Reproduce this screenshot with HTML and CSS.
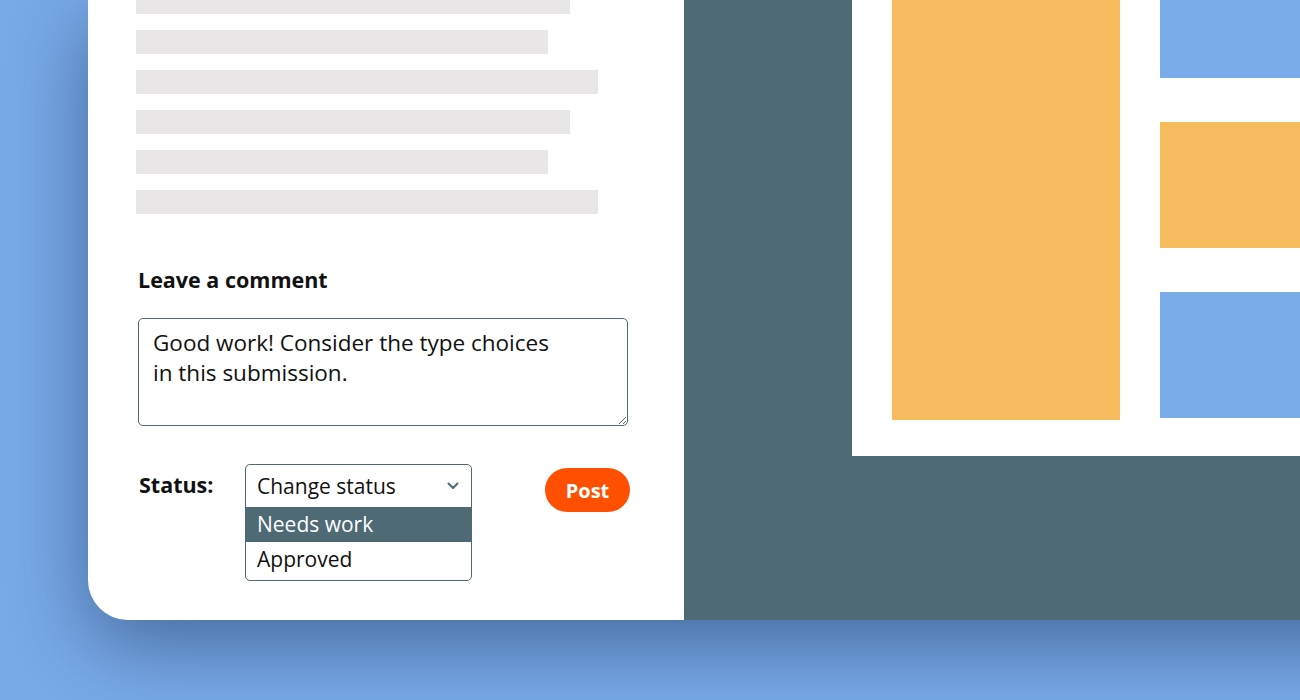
FILE: index.html
```html
<!DOCTYPE html>
<html lang="en">
<head>
    <meta charset="UTF-8">
    <meta name="viewport" content="width=device-width, initial-scale=1.0">
    <title>Review submission</title>
    <link rel="stylesheet" href="styles.css">
</head>
<body>

<div class="frame">

    <!-- 왼쪽: 글 본문 + 코멘트 -->
    <div class="review">
        <div class="lines">
            <div class="line w1"></div>
            <div class="line w2"></div>
            <div class="line w3"></div>
            <div class="line w1"></div>
            <div class="line w2"></div>
            <div class="line w3"></div>
        </div>

        <div class="comment">
            <h2 class="comment-title">Leave a comment</h2>
            <textarea class="comment-box">Good work! Consider the type choices
in this submission.</textarea>

            <div class="status-row">
                <span class="status-label">Status:</span>
                <div class="select">
                    <div class="select-head">
                        <span>Change status</span>
                        <svg class="chevron" width="12" height="8" viewBox="0 0 12 8">
                            <path d="M1.5 1.5 L6 6 L10.5 1.5" fill="none" stroke="#4d6a75" stroke-width="2" stroke-linecap="round" stroke-linejoin="round"/>
                        </svg>
                    </div>
                    <div class="option active">Needs work</div>
                    <div class="option">Approved</div>
                </div>
                <button class="post-btn">Post</button>
            </div>
        </div>
    </div>

    <!-- 오른쪽: 제출물 미리보기 -->
    <div class="preview">
        <div class="canvas">
            <div class="block big"></div>
            <div class="side">
                <div class="block blue"></div>
                <div class="block orange"></div>
                <div class="block blue"></div>
            </div>
        </div>
    </div>

</div>

</body>
</html>
```

FILE: styles.css
```css
html, body {
    margin: 0;
    height: 100%;
}
body {
    background-color: #78abe8;
    font-family: "Open Sans", Lato, sans-serif;
    overflow: hidden;
}
.frame {
    display: flex;
    margin-left: 88px;
    width: 1312px;
    height: 620px;
    border-bottom-left-radius: 40px;
    overflow: hidden;
    box-shadow: 0 24px 80px rgba(20, 40, 80, 0.5);
}

/* left side */
.review {
    width: 596px;
    flex-shrink: 0;
    background-color: #fff;
    padding-left: 48px;
    box-sizing: border-box;
    overflow: hidden;
}
.lines {
    display: flex;
    flex-direction: column;
    gap: 16px;
    margin-top: -10px;
}
.line {
    height: 24px;
    background-color: #e8e6e7;
}
.w1 { width: 434px; }
.w2 { width: 412px; }
.w3 { width: 462px; }

.comment {
    padding-left: 2px;
}
.comment-title {
    margin: 53px 0 0 0;
    font-size: 21.5px;
    line-height: 26px;
    font-weight: 700;
    color: #111;
}
.comment-box {
    display: block;
    margin-top: 25px;
    width: 490px;
    height: 108px;
    box-sizing: border-box;
    padding: 9px 14px;
    border: 1.5px solid #4d6a75;
    border-radius: 5px;
    font-family: "Open Sans", Lato, sans-serif;
    font-size: 22.5px;
    line-height: 30px;
    color: #111;
    background: #fff;
    outline: none;
}

.status-row {
    display: flex;
    align-items: flex-start;
    width: 492px;
    margin-top: 38px;
}
.status-label {
    width: 107px;
    padding-left: 1px;
    box-sizing: border-box;
    font-size: 21.5px;
    font-weight: 700;
    line-height: 26px;
    margin-top: 8px;
    color: #111;
}
.select {
    width: 227px;
    box-sizing: border-box;
    border: 1.5px solid #4d6a75;
    border-radius: 5px;
    overflow: hidden;
    font-size: 21px;
    color: #111;
    background: #fff;
}
.select-head {
    height: 42px;
    display: flex;
    align-items: center;
    justify-content: space-between;
    padding: 0 12px 0 11px;
}
.option {
    height: 35px;
    line-height: 35px;
    padding-left: 11px;
}
.option.active {
    background-color: #4d6a75;
    color: #fff;
}
.option:last-child {
    height: 38px;
}
.post-btn {
    margin-left: auto;
    margin-top: 4px;
    width: 85px;
    height: 44px;
    border: none;
    border-radius: 22px;
    background-color: #fe5000;
    color: #fff;
    font-family: "Open Sans", Lato, sans-serif;
    font-size: 20px;
    font-weight: 700;
    padding: 0;
}

/* right side */
.preview {
    flex: 1;
    background-color: #4d6a75;
    padding-left: 168px;
}
.canvas {
    height: 456px;
    background-color: #fff;
    display: flex;
    align-items: flex-end;
    gap: 40px;
    padding: 0 0 36px 40px;
    box-sizing: border-box;
    overflow: hidden;
}
.block.big {
    width: 228px;
    height: 420px;
    background-color: #f7bc5d;
    flex-shrink: 0;
}
.side {
    display: flex;
    flex-direction: column;
    gap: 44px;
    margin-bottom: 2px;
}
.side .block {
    width: 200px;
    height: 126px;
    flex-shrink: 0;
}
.block.blue { background-color: #7aacea; }
.block.orange { background-color: #f7bc5d; }
```
